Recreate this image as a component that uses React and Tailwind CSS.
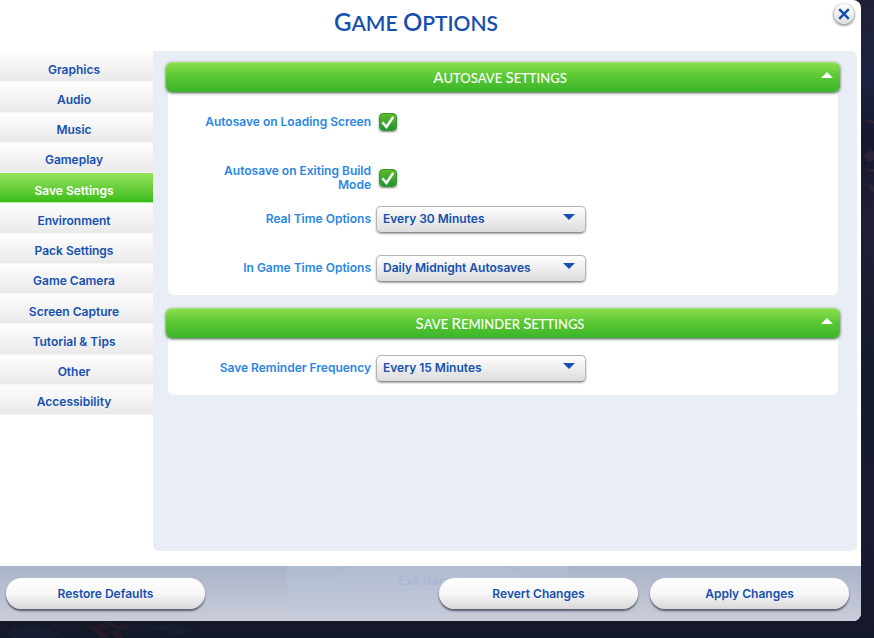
import React, { useState } from 'react';

const TABS = [
  'Graphics',
  'Audio',
  'Music',
  'Gameplay',
  'Save Settings',
  'Environment',
  'Pack Settings',
  'Game Camera',
  'Screen Capture',
  'Tutorial & Tips',
  'Other',
  'Accessibility',
];

// words in capitals, each with a taller first letter
function CapsText({ text, className }) {
  return text.split(' ').map((word, idx) => (
    <React.Fragment key={idx}>
      {idx > 0 && ' '}
      <span className={`inline-block ${className}`}>{word}</span>
    </React.Fragment>
  ));
}

function NightBackdrop() {
  return (
    <svg className="absolute inset-0 h-full w-full" aria-hidden="true">
      <defs>
        <linearGradient id="night" x1="0" y1="0" x2="0" y2="1">
          <stop offset="0" stopColor="#201f37" />
          <stop offset="0.12" stopColor="#1b2240" />
          <stop offset="0.22" stopColor="#17182f" />
          <stop offset="0.35" stopColor="#201f35" />
          <stop offset="0.6" stopColor="#141b2b" />
          <stop offset="0.8" stopColor="#1a1b33" />
          <stop offset="1" stopColor="#141929" />
        </linearGradient>
      </defs>
      <rect width="100%" height="100%" fill="url(#night)" />
      <g fill="#2c2539">
        <path d="M863 156l5-4 2-5 2 5 2-1v9l-6 2z" />
        <path d="M865 167q3 4 9 2v3q-7 0-9-5z" />
        <path d="M868 183l6 4v6l-5-5z" />
        <path d="M866 122l4-3 4 2v3z" />
      </g>
      <g fill="#251a2a">
        <path d="M84 624l12 3 6-4 8 6-9 1 8 7h-9l-8-7z" />
        <path d="M104 622l7-1 6 5 7-3 8 4-7 2-8 1z" />
        <path d="M110 632l9-2 4 8h-7z" />
      </g>
      <g fill="#181d31">
        <path d="M8 632l14-6 22 2 18 6-10 4H12z" />
        <path d="M150 627l20-3 26 6-18 5z" />
      </g>
    </svg>
  );
}

function Sidebar({ active, onSelect }) {
  return (
    <nav className="w-[153px] shrink-0 pt-px">
      <ul className="grid h-[363px] grid-rows-12">
        {TABS.map((tab) => (
          <li key={tab}>
            <button
              type="button"
              onClick={() => onSelect(tab)}
              className={
                tab === active
                  ? 'h-full w-full border-b border-[#b9ecaa] bg-linear-to-b from-[#93e35b] to-[#36bc14] pt-1.5 pr-[5px] text-white'
                  : 'h-full w-full border-b border-[#f6f6f6] bg-linear-to-b from-[#fefefe] to-[#e9e9e9] pt-1.5 pr-[5px] text-[#1550b0]'
              }
            >
              {tab}
            </button>
          </li>
        ))}
      </ul>
    </nav>
  );
}

function Section({ title, children }) {
  const [open, setOpen] = useState(true);

  return (
    <section>
      <h2>
        <button
          type="button"
          aria-expanded={open}
          onClick={() => setOpen(!open)}
          className="relative flex h-[30px] w-full items-center justify-center rounded-md border-t border-[#a5e47a] bg-linear-to-b from-[#8ade4c] via-[#5bc834] via-45% to-[#3ab42a] pr-1.5 font-['Lato',sans-serif] text-[13px] font-medium text-white shadow-[0_1px_3px_rgba(50,70,50,0.9)]"
        >
          <span>
            <CapsText text={title} className="first-letter:text-[15px]" />
          </span>
          <svg viewBox="0 0 12 6" className="absolute top-[9px] right-[7px] h-[6px] w-3">
            <path d={open ? 'M0 6L6 0l6 6z' : 'M0 0l6 6 6-6z'} fill="#fff" />
          </svg>
        </button>
      </h2>
      {open && (
        <div className="mx-0.5 rounded-b-md bg-white pt-4 pb-[13px]">{children}</div>
      )}
    </section>
  );
}

function Row({ id, label, className = '', children }) {
  return (
    <div className={`flex min-h-7 items-center ${className}`}>
      <div className="flex w-[203px] shrink-0 justify-end">
        <label htmlFor={id} className="max-w-[176px] text-right leading-[14px] text-[#2a86e4]">
          {label}
        </label>
      </div>
      {children}
    </div>
  );
}

function Tick({ id }) {
  return (
    <span className="relative ml-2 flex size-[18px]">
      <input
        id={id}
        type="checkbox"
        defaultChecked
        className="peer size-[18px] appearance-none rounded-[4px] border border-[#3d9433] bg-linear-to-b from-white to-[#ddd] shadow-[0_1px_2px_rgba(0,0,0,0.5)] checked:from-[#5fba26] checked:to-[#199433]"
      />
      <svg
        viewBox="0 0 18 18"
        className="pointer-events-none absolute inset-0 hidden size-[18px] peer-checked:block"
      >
        <path d="M3.4 9.2l4 4.8L14.2 4" fill="none" stroke="#fff" strokeWidth="2.5" />
      </svg>
    </span>
  );
}

function Dropdown({ id, options }) {
  return (
    <span className="relative ml-[5px] w-[210px]">
      <select
        id={id}
        className="block h-[27px] w-full appearance-none rounded-[5px] border border-[#b4b4b4] border-b-[#8c8c8c] bg-linear-to-b from-white to-[#dcdcdc] pl-[6px] text-[#1550b0] shadow-[0_1px_2px_rgba(0,0,0,0.35)]"
      >
        {options.map((option) => (
          <option key={option}>{option}</option>
        ))}
      </select>
      <svg viewBox="0 0 12 6" className="pointer-events-none absolute top-2 right-[11px] h-[6px] w-3">
        <path d="M0 0h12L6 6z" fill="#1550b0" />
      </svg>
    </span>
  );
}

function PillButton({ className = '', children }) {
  return (
    <button
      type="button"
      className={`h-[31px] w-[199px] rounded-full bg-linear-to-b from-white via-[#f7f7f7] to-[#d9d9d9] text-[#1550b0] shadow-[0_2px_2px_rgba(50,55,70,0.75)] ${className}`}
    >
      {children}
    </button>
  );
}

export default function App() {
  const [tab, setTab] = useState('Save Settings');

  return (
    <div className="relative min-h-screen bg-[#151a2b] pr-[13px] pb-[17px] font-['Inter',sans-serif] text-[12px] font-semibold">
      <NightBackdrop />
      <main className="relative flex min-h-[calc(100vh-17px)] flex-col overflow-hidden rounded-r-lg bg-white">
        <header className="relative h-[51px] pt-1 pr-[29px] text-center">
          <h1 className="font-['Lato',sans-serif] text-[21px] leading-9 font-semibold text-[#1550b0]">
            <CapsText text="GAME OPTIONS" className="first-letter:text-[24px]" />
          </h1>
          <button
            type="button"
            aria-label="Close"
            className="absolute top-1 right-[7px] flex size-5 items-center justify-center rounded-full bg-linear-to-b from-white to-[#dedede] shadow-[0_1px_2px_1px_rgba(70,70,70,0.5)]"
          >
            <svg viewBox="0 0 12 12" className="size-3">
              <path d="M1.2 1.2l9.6 9.6M10.8 1.2L1.2 10.8" stroke="#1550b0" strokeWidth="2.4" />
            </svg>
          </button>
        </header>

        <div className="mb-[15px] flex flex-1 pr-1">
          <Sidebar active={tab} onSelect={setTab} />
          <div className="flex flex-1 flex-col gap-[13px] rounded-r-md rounded-bl-md bg-[#e9edf5] pt-[11px] pr-[17px] pl-[13px]">
            <Section title="AUTOSAVE SETTINGS">
              <Row id="loading" label="Autosave on Loading Screen">
                <Tick id="loading" />
              </Row>
              <Row id="build" label="Autosave on Exiting Build Mode" className="mt-7">
                <Tick id="build" />
              </Row>
              <Row id="real" label="Real Time Options" className="mt-[13px]">
                <Dropdown id="real" options={['Every 30 Minutes', 'Every 15 Minutes', 'Never']} />
              </Row>
              <Row id="ingame" label="In Game Time Options" className="mt-[21px]">
                <Dropdown id="ingame" options={['Daily Midnight Autosaves', 'Never']} />
              </Row>
            </Section>
            <Section title="SAVE REMINDER SETTINGS">
              <Row id="reminder" label="Save Reminder Frequency">
                <Dropdown id="reminder" options={['Every 15 Minutes', 'Every 30 Minutes', 'Never']} />
              </Row>
            </Section>
          </div>
        </div>

        <footer className="relative flex h-[55px] gap-3 bg-linear-to-b from-[#aab3c8] to-[#cacdda] px-3 pt-3 pl-[6px]">
          {/* pause menu showing faintly through the bar */}
          <div
            aria-hidden="true"
            className="absolute top-0 left-[287px] h-12 w-[281px] rounded-b-md bg-[#bdc9e0]/30 px-[53px]"
          >
            <div className="h-[29px] rounded-full bg-[#bec5db]/30 text-center leading-[30px] text-[#a9b7d4]">
              Exit Game
            </div>
          </div>
          <PillButton className="relative mr-auto">Restore Defaults</PillButton>
          <PillButton className="relative">Revert Changes</PillButton>
          <PillButton className="relative">Apply Changes</PillButton>
        </footer>
      </main>
    </div>
  );
}
